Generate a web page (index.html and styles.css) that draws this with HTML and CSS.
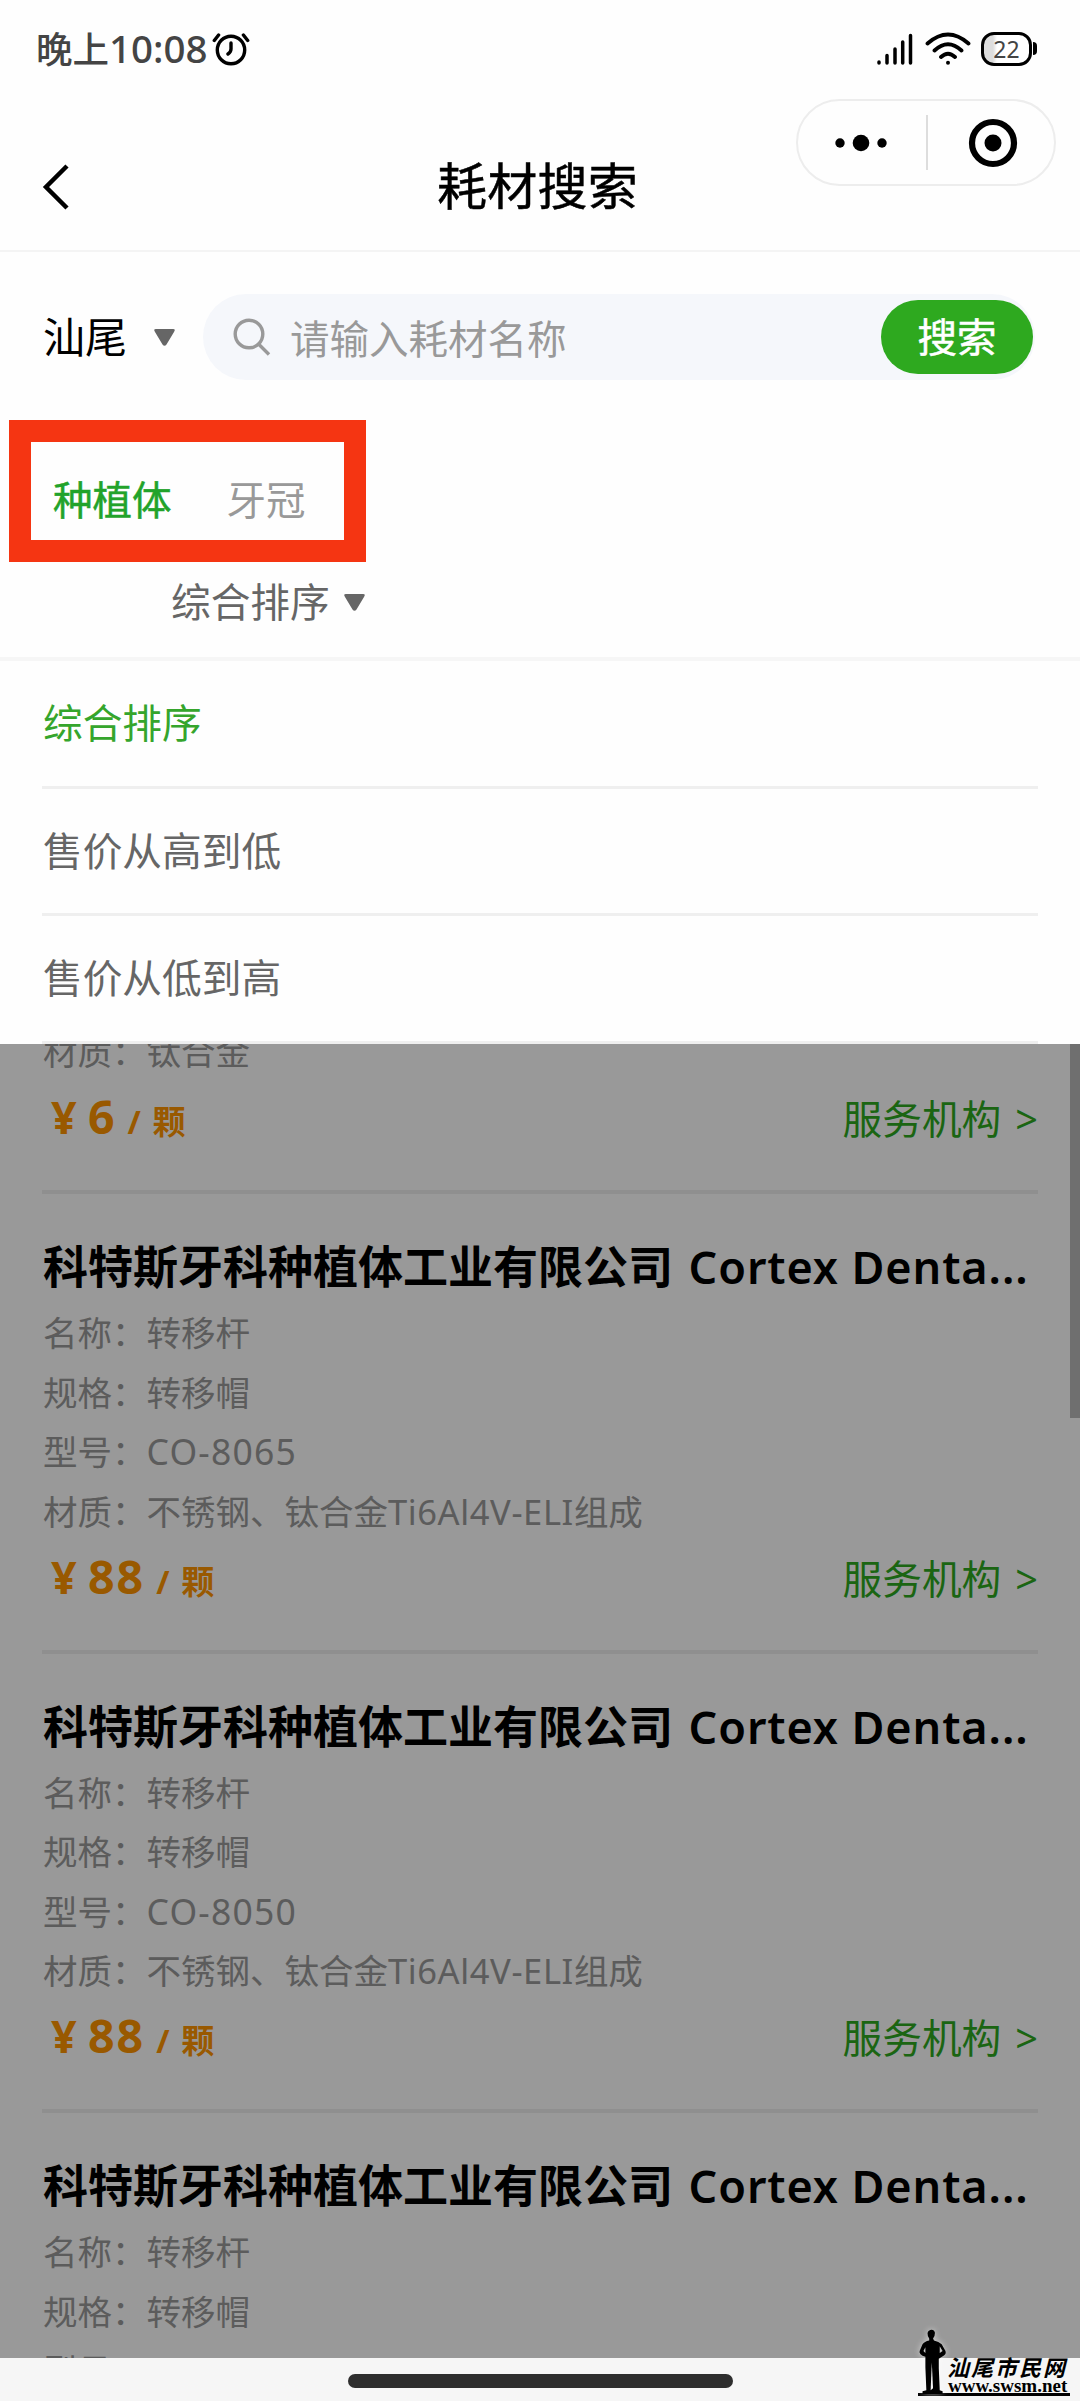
FILE: index.html
```html
<!DOCTYPE html>
<html lang="zh-CN">
<head>
<meta charset="utf-8">
<title>耗材搜索</title>
<link rel="stylesheet" href="styles.css">
</head>
<body>
<div class="phone">
  <header class="top">
    <div class="status">
      <span class="clock">晚上<span class="digits">10:08</span></span>
      <svg class="alarm" width="38" height="34" viewBox="0 0 38 34" fill="none" stroke="#000" stroke-width="3.4" stroke-linecap="round"><ellipse cx="19" cy="18" rx="13.7" ry="13.8"/><path d="M19 11v6q0 3-3 5M2.3 8.5L6.6 3M35.700 8.500L31.400 3"/></svg>
      <svg class="signal" width="36" height="34" viewBox="0 0 36 34" stroke="#000" stroke-width="3.5" stroke-linecap="round"><path d="M2 30v1M10 23.500v7.500M18 17v14M25.700 10v21M33.500 3.500v27.500"/></svg>
      <svg class="wifi" width="46" height="34" viewBox="0 0 46 34" fill="none" stroke="#000" stroke-width="3.8" stroke-linecap="round"><path d="M2.500 11.500Q23-6.500 43.500 11.500M9.500 18.500Q23 6 36.500 18.500M16 25q7-6.500 14 0"/><circle cx="23" cy="30.700" r="2" fill="#000" stroke="none"/></svg>
      <div class="battery"><span>22</span></div>
      <i class="battery-tip"></i>
    </div>
    <div class="navbar">
      <svg class="back" width="28" height="48" viewBox="0 0 28 48" fill="none" stroke="#000" stroke-width="4.500"><path d="M25 3L4 24L25 45"/></svg>
      <h1>耗材搜索</h1>
    </div>
    <div class="capsule">
      <svg width="54" height="20" viewBox="0 0 54 20"><circle cx="6" cy="10" r="4.700"/><circle cx="27" cy="10" r="8.300"/><circle cx="48" cy="10" r="4.700"/></svg>
      <i></i>
      <svg width="50" height="50" viewBox="0 0 50 50"><circle cx="25" cy="25" r="21" fill="none" stroke="#000" stroke-width="6.200"/><circle cx="25" cy="25" r="8.500"/></svg>
    </div>
  </header>

  <section class="search">
    <span class="city">汕尾</span>
    <svg class="caret" width="21" height="17" viewBox="0 0 21 17"><path d="M2 0h17q3 0 1 3L12.500 15.500q-2 2.500-4 0L1 3Q-1 0 2 0z"/></svg>
    <div class="field">
      <svg width="38" height="38" viewBox="0 0 38 38" fill="none" stroke="#999" stroke-width="3.400"><circle cx="16" cy="16" r="13.800"/><path d="M25.500 26L36 36.500"/></svg>
      <span>请输入耗材名称</span>
      <button>搜索</button>
    </div>
  </section>

  <nav class="tabs">
    <span class="active">种植体</span>
    <span>牙冠</span>
  </nav>

  <div class="sort">
    <span>综合排序</span>
    <svg class="caret" width="21" height="17" viewBox="0 0 21 17"><path d="M2 0h17q3 0 1 3L12.500 15.500q-2 2.500-4 0L1 3Q-1 0 2 0z"/></svg>
  </div>

  <ul class="options">
    <li class="active">综合排序</li>
    <li>售价从高到低</li>
    <li>售价从低到高</li>
  </ul>

  <main class="results">
    <div class="list">
      <article class="item first">
        <p>材质：钛合金</p>
        <div class="foot"><span class="price"><b class="yen">¥</b><b class="num">6</b><b class="slash">/</b><b class="unit">颗</b></span><a>服务机构<em>&gt;</em></a></div>
      </article>
      <article class="item">
        <h2>科特斯牙科种植体工业有限公司<span class="latin"> Cortex Denta...</span></h2>
        <p>名称：转移杆</p>
        <p>规格：转移帽</p>
        <p>型号：<span class="model">CO-8065</span></p>
        <p>材质：不锈钢、钛合金<span class="alloy">Ti6Al4V-ELI</span>组成</p>
        <div class="foot"><span class="price"><b class="yen">¥</b><b class="num">88</b><b class="slash">/</b><b class="unit">颗</b></span><a>服务机构<em>&gt;</em></a></div>
      </article>
      <article class="item">
        <h2>科特斯牙科种植体工业有限公司<span class="latin"> Cortex Denta...</span></h2>
        <p>名称：转移杆</p>
        <p>规格：转移帽</p>
        <p>型号：<span class="model">CO-8050</span></p>
        <p>材质：不锈钢、钛合金<span class="alloy">Ti6Al4V-ELI</span>组成</p>
        <div class="foot"><span class="price"><b class="yen">¥</b><b class="num">88</b><b class="slash">/</b><b class="unit">颗</b></span><a>服务机构<em>&gt;</em></a></div>
      </article>
      <article class="item">
        <h2>科特斯牙科种植体工业有限公司<span class="latin"> Cortex Denta...</span></h2>
        <p>名称：转移杆</p>
        <p>规格：转移帽</p>
        <p>型号：<span class="model">CO-8050</span></p>
      </article>
    </div>
    <div class="scrollbar"></div>
    <div class="mask"></div>
  </main>

  <footer class="home"><i></i></footer>

  <div class="watermark">
    <svg width="32" height="70" viewBox="0 0 32 70"><path d="M12 1q4-1 5 3q0 4-2 6l1 2q5 1 8 4l4 7q1 3-2 5l-5 3v10l1 23 3 1v3H4v-3l4-1-1-24V29q-7-2-6-6l3-7q2-3 7-4v-2Q7 3 12 1zM7 19l-2 4 2 2zM22 18v7l3-2z" fill-rule="evenodd"/><path d="M13.700 35l1.300 27-2.500 2z" fill="#f6f6f6"/></svg>
    <div class="mark-text"><strong>汕尾市民网</strong><span>www.swsm.net</span></div>
  </div>
</div>
</body>
</html>
```
FILE: styles.css
```css
* { box-sizing: border-box; margin: 0; padding: 0; }
body {
  width: 1080px;
  height: 2401px;
  overflow: hidden;
  background: #fefefe;
  font-family: "Noto Sans", "Noto Sans CJK SC", sans-serif;
  color: #000;
}
svg { display: block; flex: none; }
i, em { font-style: normal; }
.phone { position: relative; height: 2401px; display: flex; flex-direction: column; }

.top { position: relative; height: 252px; border-bottom: 2px solid #f4f4f4; flex: none; }
.status { display: flex; align-items: center; height: 97px; padding: 0 43px 0 36px; }
.clock { font-size: 36.500px; line-height: 50px; color: #444; font-weight: 500; width: 176px; white-space: nowrap; }
.digits { font-size: 38.500px; }
.alarm { margin-right: auto; }
.signal { margin-right: 12px; }
.wifi { margin-right: 10px; }
.battery {
  width: 51px; height: 34px; border: 3px solid #000; border-radius: 13px;
  background: linear-gradient(90deg, #ddd 9px, #fff 13px);
  display: flex; align-items: center; justify-content: center;
}
.battery span { font-size: 23px; line-height: 28px; color: #444; }
.battery-tip { width: 4px; height: 13px; margin-left: 1px; background: #000; border-radius: 0 4px 4px 0; }
.navbar { position: relative; height: 153px; display: flex; justify-content: center; padding-top: 54px; }
.back { position: absolute; left: 42px; top: 66px; }
.navbar h1 { font-size: 50px; font-weight: 400; line-height: 70px; letter-spacing: .3px; margin-right: 5px; -webkit-text-stroke: .5px #000; }
.capsule {
  position: absolute; left: 796px; top: 99px; width: 260px; height: 87px;
  border: 2px solid #ededed; border-radius: 44px;
  display: flex; align-items: center; justify-content: space-between; padding: 0 36px 0 36px;
}
.capsule i { width: 2px; height: 55px; background: #ddd; margin: 0 3px 0 0; }

.search { display: flex; align-items: center; height: 170px; padding: 0 45px 0 43px; flex: none; }
.city { font-size: 42px; line-height: 60px; width: 111px; }
.caret { fill: #666; }
.field {
  display: flex; align-items: center; margin-left: 28px; width: 832px; height: 86px;
  border-radius: 43px; background: #f5f7fb; padding-left: 30px;
}
.field span { font-size: 39.5px; line-height: 56px; color: #999; margin: 4px auto 0 19px; }
.field button {
  width: 152px; height: 74px; margin-right: 2px; border: 0; border-radius: 37px; background: #2ea91f;
  color: #fff; font: 400 39.500px/60px "Noto Sans", "Noto Sans CJK SC", sans-serif; -webkit-text-stroke: .5px #fff;
}

.tabs {
  display: flex; width: 357px; height: 142px; margin: -2px 0 0 9px; border: 22px solid #f53512;
  padding: 30px 0 0 22px; gap: 55px; flex: none;
  font-size: 39.500px; line-height: 56px; color: #999;
}
.tabs .active { color: #22a32a; -webkit-text-stroke: .5px #22a32a; }
.sort {
  display: flex; align-items: center; gap: 14px; height: 99px; padding: 0 0 15px 171px; flex: none;
  border-bottom: 4px solid #f6f6f6; font-size: 39.700px; line-height: 56px; color: #666;
}
.options { list-style: none; height: 383px; padding: 0 42px; flex: none; }
.options li {
  height: 127.500px; border-bottom: 3px solid #efefef;
  font-size: 39.700px; line-height: 125px; color: #666; padding-left: 1px;
}
.options .active { color: #35a52c; }

.results { position: relative; height: 1314px; overflow: hidden; flex: none; background: #fff; }
.list { padding: 0 42px; margin-top: -22px; }
.item { height: 459.500px; padding-top: 40px; border-bottom: 4px solid #efefef; }
.item.first { height: 172px; padding-top: 0; }
.item h2 { font-size: 45px; line-height: 65px; margin-bottom: 4px; font-weight: 600; white-space: nowrap; padding-left: 1px; }
.latin { letter-spacing: .9px; margin-left: 3px; }
.item p { font-size: 34.500px; line-height: 59.500px; color: #999; padding-left: 1px; white-space: nowrap; }
.model { font-size: 35.500px; letter-spacing: 1.200px; }
.alloy { letter-spacing: .600px; }
.foot { display: flex; justify-content: space-between; align-items: center; height: 75px; }
.price { display: flex; align-items: baseline; color: #ff9500; line-height: 60px; padding-left: 9px; }
.yen { font-size: 45px; width: 37px; }
.num { font-size: 46.500px; letter-spacing: 2px; }
.slash { font-size: 32px; margin-left: 11px; width: 25px; }
.unit { font-size: 33px; }
.foot a { font-size: 39.700px; line-height: 60px; color: #2ea91f; }
.foot em { margin-left: 14px; }
.scrollbar { position: absolute; right: 0; top: 0; width: 10px; height: 374px; background: #b9b9b9; }
.mask { position: absolute; inset: 0; background: rgba(0, 0, 0, .4); }

.home { flex: none; height: 43px; background: #f6f6f6; display: flex; justify-content: center; padding-top: 16px; }
.home i { width: 385px; height: 14px; border-radius: 7px; background: #2e2e2e; }

.watermark {
  position: absolute; left: 918px; top: 2329px; width: 152px; height: 67px;
  display: flex; border-bottom: 3px solid #000; color: #000;
}
.watermark svg { height: 67px; filter: drop-shadow(0 0 3px rgba(255, 255, 255, .6)); }
.mark-text { display: flex; flex-direction: column; padding-top: 28px; margin-left: -3px; }
.mark-text strong { font-size: 22px; line-height: 20px; letter-spacing: 2px; font-style: italic; white-space: nowrap; }
.mark-text span { font: bold 19px/17px "Liberation Serif", serif; margin-left: 1px; }
```
